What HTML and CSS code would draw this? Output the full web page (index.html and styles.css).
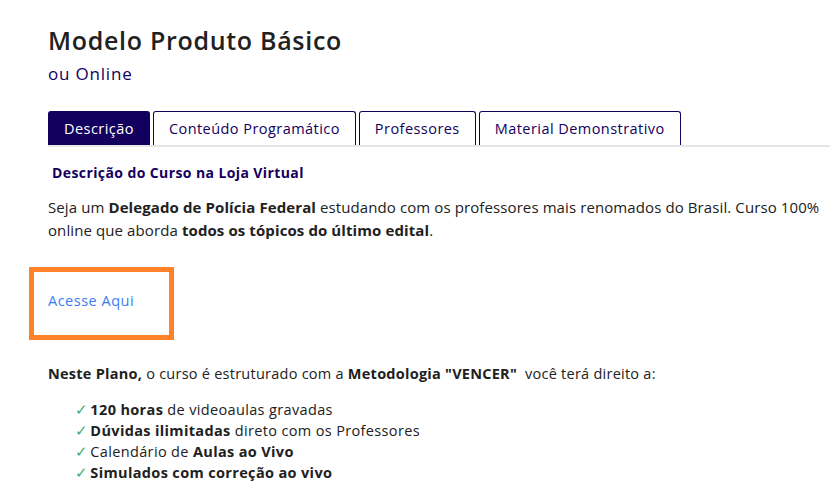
FILE: index.html
```html
<!DOCTYPE html>
<html lang="pt-BR">
<head>
<meta charset="utf-8">
<title>Modelo Produto Básico</title>
<link rel="stylesheet" href="styles.css">
</head>
<body>
<main class="page">
  <h1 class="title">Modelo Produto Básico</h1>
  <p class="subtitle">ou Online</p>

  <nav class="tabs">
    <span class="tab active">Descrição</span>
    <span class="tab">Conteúdo Programático</span>
    <span class="tab">Professores</span>
    <span class="tab">Material Demonstrativo</span>
  </nav>

  <section class="content">
    <h2 class="section-title">Descrição do Curso na Loja Virtual</h2>
    <p class="text intro">Seja um <b>Delegado de Polícia Federal</b> estudando com os professores mais renomados do Brasil. Curso 100% online que aborda <b>todos os tópicos do último edital</b>.</p>

    <div class="highlight">
      <a class="link" href="#">Acesse Aqui</a>
    </div>

    <p class="text plan"><b>Neste Plano,</b> o curso é estruturado com a <b>Metodologia "VENCER"</b>&nbsp; você terá direito a:</p>

    <ul class="checks">
      <li><span class="ck">✓</span><b>120 horas</b> de videoaulas gravadas</li>
      <li><span class="ck">✓</span><b>Dúvidas ilimitadas</b> direto com os Professores</li>
      <li><span class="ck">✓</span>Calendário de <b>Aulas ao Vivo</b></li>
      <li><span class="ck">✓</span><b>Simulados com correção ao vivo</b></li>
    </ul>
  </section>
</main>
</body>
</html>
```
FILE: styles.css
```css
* { box-sizing: border-box; }
html, body { margin: 0; padding: 0; background: #fff; }
body {
  font-family: "Open Sans", "Noto Sans", sans-serif;
  color: #212121;
  overflow: hidden;
  width: 830px;
}
.page {
  padding: 24px 0 0 48px;
  width: 860px;
}
.title {
  margin: 0;
  font-size: 25px;
  font-weight: 600;
  line-height: 32px;
  letter-spacing: 0.7px;
  color: #212121;
}
.subtitle {
  margin: 6px 0 0;
  font-size: 17px;
  line-height: 24px;
  letter-spacing: 0.8px;
  color: #13005e;
}
.tabs {
  display: flex;
  gap: 3px;
  margin-top: 25px;
  border-bottom: 2px solid #e6e6e6;
}
.tab {
  display: block;
  padding: 0 15px;
  height: 34px;
  line-height: 33px;
  font-size: 14.5px;
  letter-spacing: 0.45px;
  color: #13005e;
  border: 1px solid #13005e;
  border-bottom: none;
  border-radius: 3px 3px 0 0;
  background: #fff;
}
.tab.active {
  background: #13005e;
  color: #fff;
}
.content { padding-top: 15px; }
.section-title {
  margin: 0 0 0 4px;
  font-size: 14px;
  font-weight: 700;
  line-height: 22px;
  letter-spacing: 0.4px;
  color: #13005e;
}
.text {
  margin: 12px 0 0;
  font-size: 14.5px;
  line-height: 23px;
  letter-spacing: 0.25px;
  color: #212121;
}
.intro {
  font-size: 15px;
  letter-spacing: 0.1px;
  width: 800px;
}
.text b { font-weight: 700; }
.highlight {
  width: 145px;
  height: 73px;
  margin: 25px 0 0 -19px;
  border: 5px solid #ff8128;
  display: flex;
  align-items: flex-start;
  padding: 19px 0 0 14px;
}
.link {
  font-size: 14.5px;
  line-height: 20px;
  letter-spacing: 0.5px;
  color: #3a7df0;
  text-decoration: none;
}
.plan { margin-top: 22px; }
.checks {
  list-style: none;
  margin: 14px 0 0;
  padding: 0 0 0 27px;
  font-size: 14.5px;
  line-height: 21px;
  letter-spacing: 0.35px;
}
.ck {
  color: #3aae77;
  margin-right: 2px;
}
```
